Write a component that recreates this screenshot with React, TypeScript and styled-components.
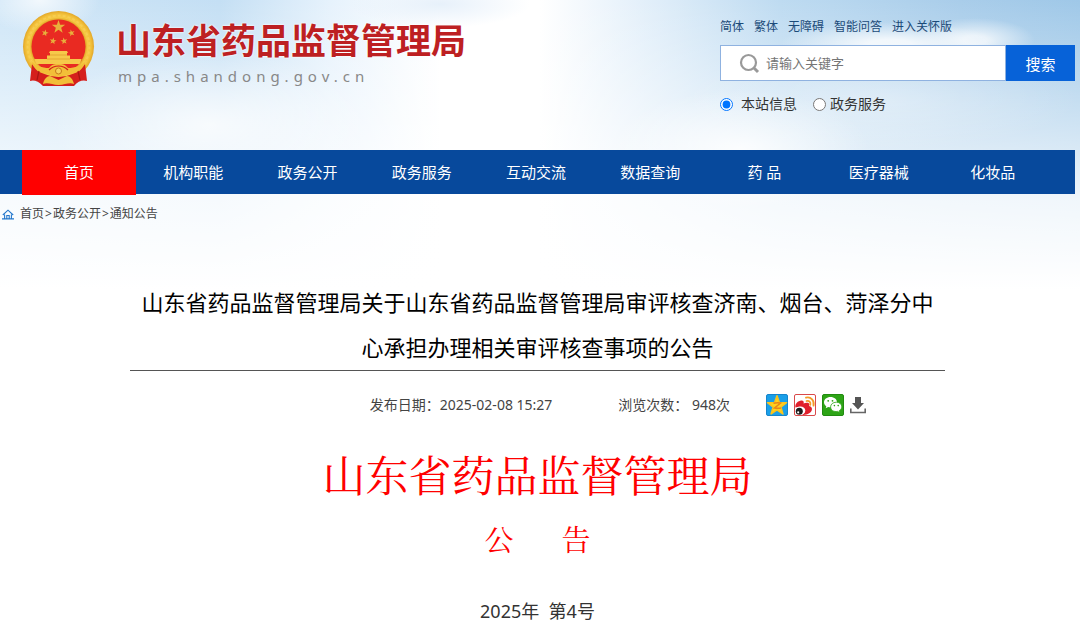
import React from "react";
import styled, { createGlobalStyle } from "styled-components";

const sans = `"Noto Sans", "Noto Sans CJK SC", sans-serif`;
const song = `"Noto Serif CJK SC", "Source Han Serif SC", SimSun, "AR PL UMing CN", "Liberation Serif", "Noto Sans CJK SC", serif`;

const GlobalStyle = createGlobalStyle`
  * { box-sizing: border-box; }
  body { margin: 0; background: #fff; color: #333; font-family: ${sans}; }
  button, input { font-family: inherit; }
  a { color: inherit; text-decoration: none; }
`;

const Page = styled.div`
  min-height: 100vh;
  background:
    radial-gradient(ellipse 110px 22px at 890px 44px, rgba(255, 255, 255, 0.8) 20%, transparent),
    radial-gradient(ellipse 60px 22px at 975px 40px, rgba(255, 255, 255, 0.7) 20%, transparent),
    radial-gradient(ellipse 60px 34px at 40px 0, rgba(255, 255, 255, 0.75), transparent),
    radial-gradient(ellipse 90px 24px at 440px 4px, rgba(228, 239, 250, 0.9), transparent),
    radial-gradient(ellipse 160px 75px at 210px 125px, rgba(255, 255, 255, 0.75), transparent),
    radial-gradient(ellipse 130px 60px at 740px 150px, rgba(255, 255, 255, 0.85), transparent),
    radial-gradient(ellipse 200px 50px at 880px 100px, rgba(255, 255, 255, 0.3), transparent),
    linear-gradient(transparent 0, rgba(255, 255, 255, 0.6) 150px, rgba(255, 255, 255, 0.85) 200px, #fff 290px),
    linear-gradient(90deg, #cfe6f7 0, #c4dff4 220px, #e6f2fc 330px, #fff 440px, #fff 540px, #e4f0fa 640px, #bedbf1 780px, #a9cdea 960px, #9fc8e8 1080px);
`;

const Header = styled.header`
  display: flex;
  justify-content: space-between;
  height: 150px;
  padding: 11px 5px 0 22px;
`;

const Brand = styled.a`
  display: flex;
  align-items: flex-start;
  gap: 21px;
`;

const BrandText = styled.div`
  display: flex;
  flex-direction: column;
  padding-top: 5px;
`;

const BrandName = styled.span`
  font: 700 35px/50px ${sans};
  color: #bd2022;
  text-shadow: 0 0 2px #fff, 0 0 2px #fff;
`;

const Domain = styled.span`
  padding-left: 2px;
  font-size: 15px;
  line-height: 20px;
  letter-spacing: 5px;
  color: #888;
`;

const Tools = styled.div`
  width: 355px;
  padding-top: 6px;
`;

const QuickLinks = styled.nav`
  display: flex;
  gap: 10px;
  font-size: 12px;
  line-height: 20px;
  color: #1b4a78;
`;

const SearchForm = styled.form`
  display: flex;
  height: 36px;
  margin-top: 8px;
`;

const SearchBox = styled.label`
  display: flex;
  flex: 1;
  align-items: center;
  gap: 6px;
  padding-left: 18px;
  border: 1px solid #8fb2e0;
  background: #fff;
`;

const SearchInput = styled.input`
  flex: 1;
  min-width: 0;
  padding: 0;
  border: 0;
  outline: 0;
  font-size: 13px;
  background: transparent;
  &::placeholder { color: #757575; }
`;

const SearchButton = styled.button`
  width: 69px;
  border: 0;
  color: #fff;
  font-size: 15px;
  background: #0762d8;
`;

const Scopes = styled.div`
  display: flex;
  gap: 16px;
  margin-top: 13px;
`;

const Scope = styled.label<{ $gap: number }>`
  display: flex;
  align-items: center;
  gap: ${(p) => p.$gap}px;
  font-size: 14px;
  line-height: 20px;
  input { width: 13px; height: 13px; margin: 0; }
`;

const MainNav = styled.nav`
  display: flex;
  height: 44px;
  margin-right: 5px;
  padding: 0 25px 0 22px;
  background: #07499c;
`;

const NavItem = styled.a<{ $active?: boolean }>`
  flex: 1;
  height: 45px;
  text-align: center;
  font-size: 15px;
  line-height: 45px;
  color: #fff;
  background: ${(p) => (p.$active ? "#f00" : "transparent")};
`;

const Breadcrumb = styled.nav`
  display: flex;
  align-items: center;
  gap: 1px;
  padding: 10px 2px;
  font-size: 12px;
  line-height: 20px;
  color: #444;
  svg { margin-right: 5px; }
`;

const Content = styled.main`
  padding-right: 5px;
`;

const Article = styled.article`
  max-width: 815px;
  margin: 46px auto 0;
`;

const Title = styled.h1`
  margin: 0;
  padding: 0 5px;
  border-bottom: 1px solid #555;
  text-align: center;
  font-weight: 400;
  font-size: 22px;
  line-height: 45px;
  color: #000;
`;

const Meta = styled.div`
  display: flex;
  align-items: center;
  justify-content: flex-end;
  padding: 22px 79px 22px 0;
  font-size: 14px;
  line-height: 24px;
  color: #444;
`;

const Views = styled.span`
  margin: 0 36px 0 66px;
`;

const Share = styled.div`
  display: flex;
  gap: 6px;
`;

const ShareButton = styled.button`
  display: flex;
  padding: 0;
  border: 0;
  background: none;
`;

const Body = styled.section`
  text-align: center;
`;

const Agency = styled.h2`
  margin: 2px 0 0;
  font: 400 43px/66px ${song};
  color: #f00;
`;

const Notice = styled.h3`
  display: flex;
  justify-content: center;
  gap: 48px;
  margin: 8px 0 0;
  font: 400 29px/48px ${song};
  color: #f00;
`;

const Issue = styled.p`
  margin: 34px 0 0;
  padding-bottom: 16px;
  font-size: 18px;
  line-height: 28px;
  white-space: pre;
`;

const star = (cx: number, cy: number, r: number, turn = 0) =>
  Array.from({ length: 10 }, (_, i) => {
    const a = ((i * 36 - 90 + turn) * Math.PI) / 180;
    const d = i % 2 ? r * 0.4 : r;
    return `${(cx + d * Math.cos(a)).toFixed(2)},${(cy + d * Math.sin(a)).toFixed(2)}`;
  }).join(" ");

const Emblem = () => (
  <svg width="73" height="76" viewBox="0 0 73 76" role="img" aria-label="国徽">
    <defs>
      <radialGradient id="gold" cx="50%" cy="50%" r="50%">
        <stop offset="74%" stopColor="#d99a1c" />
        <stop offset="82%" stopColor="#f6c944" />
        <stop offset="92%" stopColor="#f2c03a" />
        <stop offset="100%" stopColor="#e2a628" />
      </radialGradient>
    </defs>
    <circle cx="36.500" cy="35.500" r="35.500" fill="url(#gold)" />
    <circle cx="36.500" cy="35.500" r="31" fill="none" stroke="#ffe07a" strokeWidth="2" strokeDasharray="3 2" opacity=".3" />
    <circle cx="36.500" cy="35.500" r="27" fill="#e92a22" />
    <polygon points={star(36.5, 16, 7)} fill="#e8b03c" />
    <polygon points={star(23, 22, 3.6, 15)} fill="#e8b03c" />
    <polygon points={star(49.5, 22, 3.6, -15)} fill="#e8b03c" />
    <polygon points={star(31, 30, 3.6, 10)} fill="#e8b03c" />
    <polygon points={star(42, 30, 3.6, -10)} fill="#e8b03c" />
    <path d="M28 40h17l1 2h-1v2.500h3V48h11.500c-.5 2-1 3.500-2 5H14.500c-1-1.500-1.500-3-2-5H25v-3.500h3V42h-1z" fill="#f6c94a" />
    <path d="M28 44h17M25 48h23" stroke="#dd9a2a" strokeWidth=".7" />
    <path d="M10 53 L8 70 Q14 68 21 75 L52 75 Q58 68 65 70 L63 53 Q52 66 36.500 66 Q21 66 10 53Z" fill="#d51f1c" />
    <path d="M9 50c5 5 11 7 18 7 3-4 6-4 9.500-4s6.500 0 9.500 4c7 0 13-2 18-7-3 9-9 13-17 13-4 3-17 3-21 0-8 0-14-4-17-13z" fill="#f2be38" />
    <path d="M27 59c3-3 6-4 9.500-4s6.500 1 9.500 4" fill="none" stroke="#d51f1c" strokeWidth="1.200" />
    <circle cx="36.500" cy="60" r="3" fill="#f7d15a" stroke="#c9781a" />
    <path d="M21 73c1-5 4-8 7-8l8.500 4 8.500-4c3 0 6 3 7 8-5-2-9 1-15.500 1S26 71 21 73z" fill="#f2be38" />
    <path d="M17 60l-2 9M56 60l2 9" stroke="#a81414" strokeWidth="1.200" />
  </svg>
);

const SearchIcon = () => (
  <svg width="21" height="21" viewBox="0 0 21 21" fill="none" stroke="#999" strokeWidth="2.200" aria-hidden="true">
    <circle cx="9.500" cy="9.500" r="7.500" />
    <path d="M15 15l4 4" strokeWidth="3" />
  </svg>
);

const HomeIcon = () => (
  <svg width="12" height="11" viewBox="0 0 12 11" fill="none" stroke="#2377cc" strokeWidth="1.100" aria-hidden="true">
    <path d="M.8 6L6 1.200 11.200 6M2.600 5.500V9.500M9.400 5.500V9.500M0 9.900h12M4.800 9.500V6.500h2.400v3" />
  </svg>
);

const QzoneIcon = () => (
  <svg width="22" height="22" viewBox="0 0 22 22" aria-hidden="true">
    <rect x=".5" y=".5" width="21" height="21" rx="1.500" fill="#1a9fe8" stroke="#1685cc" />
    <polygon points={star(11, 11.8, 10)} fill="#ffd21f" stroke="#fbc41c" strokeWidth="1.600" strokeLinejoin="round" />
    <path d="M7.500 9.200c3-.7 5-.7 7-.2L8.500 14c2.500.5 4.500.5 6.500 0" fill="none" stroke="#e8861a" strokeWidth="1.500" />
  </svg>
);

const WeiboIcon = () => (
  <svg width="22" height="22" viewBox="0 0 22 22" aria-hidden="true">
    <rect x=".5" y=".5" width="21" height="21" rx="1.500" fill="#fff" stroke="#d9494a" />
    <path d="M1.500 13.500C.5 10 4.500 6 8 6.500c2 .3 2 2 1.500 3 2.500-1 5.500-1 5.800.8.200.8-.2 1.300-.2 1.700 2.200.5 3.400 2 2.700 4.200C16.500 19.500 12 21 8 21c2-1 3.500-3 3-5-.8-3-5.500-4-9.500-2.500z" fill="#e0202c" />
    <ellipse cx="6.500" cy="16.500" rx="4.800" ry="4" fill="#fff" />
    <circle cx="5.300" cy="17.300" r="3.500" fill="#1c1c1c" />
    <circle cx="4.200" cy="18.300" r="1.100" fill="#fff" />
    <path d="M12.500 7c2.500-.8 4.500 1.200 3.800 3.800M12 3.700c5-1.200 8.700 2.800 7.500 8" fill="none" stroke="#f49a25" strokeWidth="1.800" strokeLinecap="round" />
  </svg>
);

const WechatIcon = () => (
  <svg width="22" height="22" viewBox="0 0 22 22" aria-hidden="true">
    <rect x=".5" y=".5" width="21" height="21" rx="1.500" fill="#2da416" stroke="#218b10" />
    <path d="M8.500 3C4.800 3 2 5.300 2 8.200c0 1.700.9 3.100 2.300 4L3.700 14.300l2.500-1.300c4 1 8.800-1 8.800-4.800C15 5.300 12.200 3 8.500 3z" fill="#fff" />
    <path d="M14.300 8.200c-3.300 0-5.700 2-5.700 4.700 0 3.300 3.500 5.300 7 4.500l2.200 1.200-.5-2c1.500-.9 2.500-2.200 2.500-3.700 0-2.700-2.300-4.700-5.500-4.700z" fill="#fff" stroke="#2da416" strokeWidth=".8" />
    <g fill="#2da416">
      <circle cx="6.200" cy="6.800" r=".9" /><circle cx="10.500" cy="6.800" r=".9" />
      <circle cx="12.400" cy="11.600" r=".8" /><circle cx="16.200" cy="11.600" r=".8" />
    </g>
  </svg>
);

const DownloadIcon = () => (
  <svg width="16" height="22" viewBox="0 0 16 22" aria-hidden="true">
    <path d="M5 3h6v6h3l-6 6.500L2 9h3z" fill="#555" />
    <path d="M.8 14.500v4h14.400v-4" fill="none" stroke="#666" strokeWidth="1.600" />
  </svg>
);

const quickLinks = ["简体", "繁体", "无障碍", "智能问答", "进入关怀版"];
const navItems = ["首页", "机构职能", "政务公开", "政务服务", "互动交流", "数据查询", "药 品", "医疗器械", "化妆品"];
const shares = [
  { label: "分享到QQ空间", Icon: QzoneIcon },
  { label: "分享到微博", Icon: WeiboIcon },
  { label: "分享到微信", Icon: WechatIcon },
  { label: "下载", Icon: DownloadIcon },
];

export default function App() {
  return (
    <Page>
      <GlobalStyle />
      <Header>
        <Brand href="#">
          <Emblem />
          <BrandText>
            <BrandName>山东省药品监督管理局</BrandName>
            <Domain>mpa.shandong.gov.cn</Domain>
          </BrandText>
        </Brand>
        <Tools>
          <QuickLinks>
            {quickLinks.map((t) => <a href="#" key={t}>{t}</a>)}
          </QuickLinks>
          <SearchForm onSubmit={(e) => e.preventDefault()}>
            <SearchBox>
              <SearchIcon />
              <SearchInput type="text" placeholder="请输入关键字" aria-label="请输入关键字" />
            </SearchBox>
            <SearchButton type="submit">搜索</SearchButton>
          </SearchForm>
          <Scopes>
            <Scope $gap={8}><input type="radio" name="scope" defaultChecked />本站信息</Scope>
            <Scope $gap={4}><input type="radio" name="scope" />政务服务</Scope>
          </Scopes>
        </Tools>
      </Header>
      <MainNav>
        {navItems.map((t, i) => <NavItem href="#" key={t} $active={i === 0}>{t}</NavItem>)}
      </MainNav>
      <Breadcrumb>
        <HomeIcon />
        <a href="#">首页</a>&gt;<a href="#">政务公开</a>&gt;<a href="#">通知公告</a>
      </Breadcrumb>
      <Content>
        <Article>
          <Title>山东省药品监督管理局关于山东省药品监督管理局审评核查济南、烟台、菏泽分中心承担办理相关审评核查事项的公告</Title>
          <Meta>
            <span>发布日期：2025-02-08 15:27</span>
            <Views>浏览次数： 948次</Views>
            <Share>
              {shares.map(({ label, Icon }) => (
                <ShareButton type="button" key={label} aria-label={label}><Icon /></ShareButton>
              ))}
            </Share>
          </Meta>
          <Body>
            <Agency>山东省药品监督管理局</Agency>
            <Notice><span>公</span><span>告</span></Notice>
            <Issue>2025年  第4号</Issue>
          </Body>
        </Article>
      </Content>
    </Page>
  );
}
